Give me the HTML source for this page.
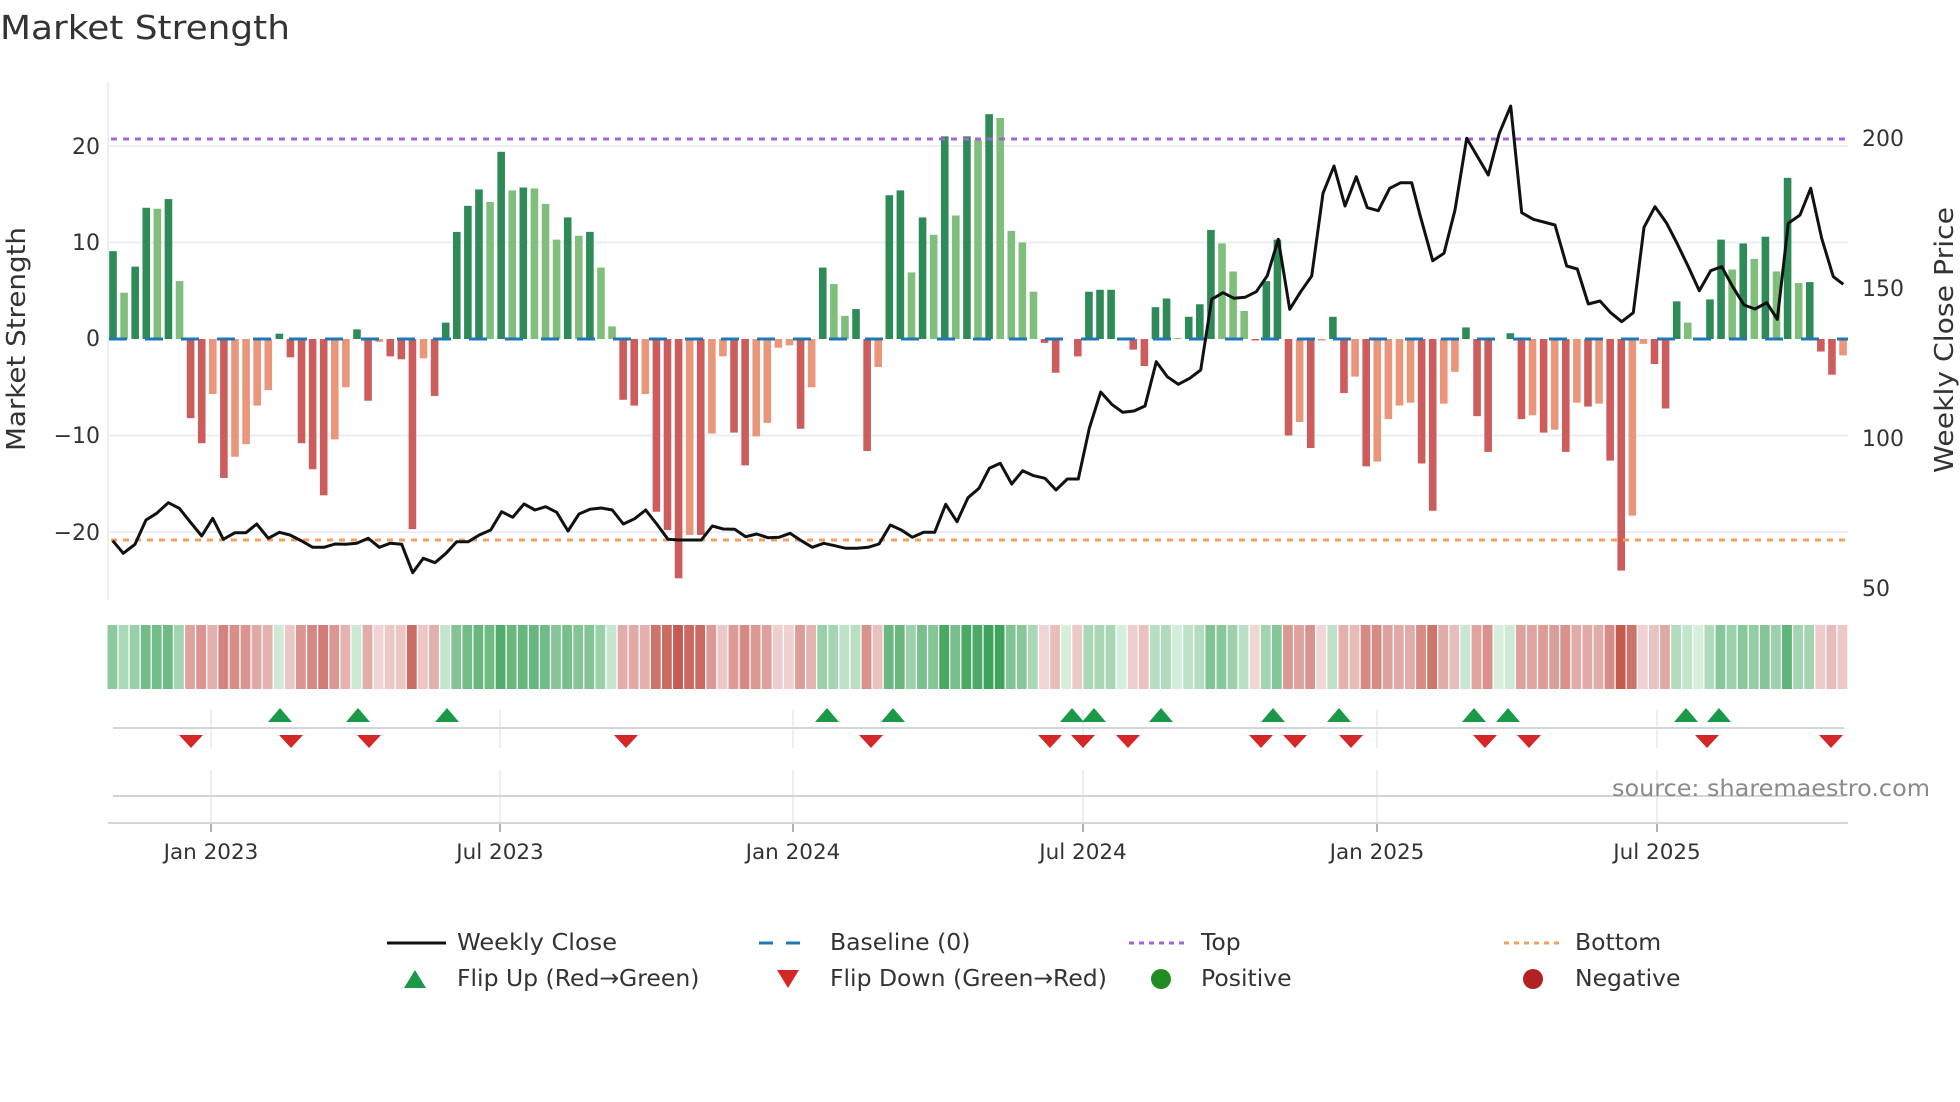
<!DOCTYPE html>
<html><head><meta charset="utf-8"><style>
html,body{margin:0;padding:0;background:#fff;}
svg{display:block;font-family:"DejaVu Sans","Liberation Sans",sans-serif;}
</style></head><body>
<svg id="s" width="1960" height="1102" viewBox="0 0 1960 1102" xmlns="http://www.w3.org/2000/svg">
<rect width="1960" height="1102" fill="#fff"/>
<text x="0" y="39" font-size="33" fill="#333" textLength="290" lengthAdjust="spacingAndGlyphs">Market Strength</text>
<g id="grid"></g>
<g id="bars"></g>
<g id="lines"></g>
<g id="heat"></g>
<g id="marks"></g>
<g font-size="22" fill="#333">
<text x="100" y="154" text-anchor="end">20</text>
<text x="100" y="250" text-anchor="end">10</text>
<text x="100" y="346" text-anchor="end">0</text>
<text x="100" y="443" text-anchor="end">−10</text>
<text x="100" y="540" text-anchor="end">−20</text>
<text x="1862" y="146">200</text>
<text x="1862" y="296">150</text>
<text x="1862" y="446">100</text>
<text x="1862" y="596">50</text>
</g>
<text transform="translate(25,339) rotate(-90)" font-size="26" fill="#333" text-anchor="middle" textLength="224" lengthAdjust="spacingAndGlyphs">Market Strength</text>
<text transform="translate(1953,340) rotate(-90)" font-size="26" fill="#333" text-anchor="middle" textLength="266" lengthAdjust="spacingAndGlyphs">Weekly Close Price</text>
<g font-size="21.5" fill="#333" text-anchor="middle">
<text x="211" y="859">Jan 2023</text>
<text x="500" y="859">Jul 2023</text>
<text x="793" y="859">Jan 2024</text>
<text x="1083" y="859">Jul 2024</text>
<text x="1377" y="859">Jan 2025</text>
<text x="1657" y="859">Jul 2025</text>
</g>
<text x="1930" y="796" font-size="23" fill="#8a8a8a" text-anchor="end" textLength="318" lengthAdjust="spacingAndGlyphs">source: sharemaestro.com</text>
<g font-size="23.5" fill="#333">
<line x1="387" y1="943" x2="446" y2="943" stroke="#111" stroke-width="3"/>
<text x="457" y="950" textLength="160" lengthAdjust="spacingAndGlyphs">Weekly Close</text>
<line x1="759" y1="943" x2="813" y2="943" stroke="#1f77b4" stroke-width="3" stroke-dasharray="14,13"/>
<text x="830" y="950">Baseline (0)</text>
<line x1="1129" y1="943" x2="1185" y2="943" stroke="#a066d8" stroke-width="3" stroke-dasharray="5,5"/>
<text x="1201" y="950">Top</text>
<line x1="1504" y1="943" x2="1560" y2="943" stroke="#f0a060" stroke-width="3" stroke-dasharray="5,5"/>
<text x="1575" y="950">Bottom</text>
<polygon points="404,988 426,988 415,970" fill="#1a9a48"/>
<text x="457" y="986">Flip Up (Red→Green)</text>
<polygon points="777,970 799,970 788,988" fill="#d62728"/>
<text x="830" y="986">Flip Down (Green→Red)</text>
<circle cx="1161" cy="979" r="10" fill="#228b22"/>
<text x="1201" y="986">Positive</text>
<circle cx="1533" cy="979" r="10" fill="#b22222"/>
<text x="1575" y="986">Negative</text>
</g>
</svg>
<script>
const NS="http://www.w3.org/2000/svg";
function el(p,t,a){const e=document.createElementNS(NS,t);for(const k in a)e.setAttribute(k,a[k]);p.appendChild(e);return e;}
const v=[9.1,4.8,7.5,13.6,13.5,14.5,6,-8.2,-10.8,-5.7,-14.4,-12.2,-10.9,-6.9,-5.3,0.55,-1.9,-10.8,-13.5,-16.2,-10.4,-5,1.0,-6.4,-0.3,-1.8,-2.1,-19.7,-2.0,-5.9,1.7,11.1,13.8,15.5,14.2,19.4,15.4,15.7,15.6,14,
10.3,12.6,10.7,11.1,7.4,1.3,-6.3,-6.9,-5.7,-17.9,-19.8,-24.8,-20.3,-20.3,-9.8,-1.8,-9.7,-13.1,-10.1,-8.7,-0.9,-0.65,-9.3,-5,7.4,5.7,2.4,3.1,-11.6,-2.9,14.9,15.4,6.9,12.6,10.8,21,12.8,21,20.6,23.3,
22.9,11.2,10,4.9,-0.4,-3.5,0,-1.8,4.9,5.1,5.1,0,-1.1,-2.8,3.3,4.2,0.1,2.3,3.6,11.3,9.9,7,2.9,-0.15,6,10.3,-10,-8.6,-11.3,-0.15,2.3,-5.6,-3.9,-13.2,-12.7,-8.3,-6.9,-6.6,-12.9,
-17.8,-6.7,-3.4,1.2,-8,-11.7,0,0.6,-8.3,-7.9,-9.7,-9.4,-11.7,-6.6,-7,-6.7,-12.6,-24,-18.3,-0.5,-2.6,-7.2,3.9,1.7,0,4.1,10.3,7.2,9.9,8.3,10.6,7,16.7,5.8,5.9,-1.3,-3.7,-1.7];
const light=new Set([1,4,6,9,11,12,13,14,20,21,24,28,34,36,38,39,40,42,44,45,48,52,54,55,58,59,60,61,63,65,66,69,72,74,76,78,80,81,82,83,96,100,101,102,107,109,112,114,115,116,117,120,121,128,130,132,134,137,138,142,146,148,150,152,156]);
const X0=113,DX=11.09,Y0=339,K=9.65;
const grid=document.getElementById('grid');
[20,10,-10,-20].forEach(g=>el(grid,'line',{x1:107,x2:1848,y1:Y0-g*K,y2:Y0-g*K,stroke:'#eceef3','stroke-width':2}));
el(grid,'line',{x1:108,x2:108,y1:82,y2:600,stroke:'#eceef3','stroke-width':2});
const bars=document.getElementById('bars');
v.forEach((val,i)=>{const x=X0+DX*i-3.8;const h=Math.abs(val)*K;let c;
 if(val>=0)c=light.has(i)?'#7fbf7b':'#2e8b57';else c=light.has(i)?'#e9967a':'#cd5c5c';
 if(h>0.3)el(bars,'rect',{x:x,y:val>=0?Y0-h:Y0,width:7.6,height:h,fill:c});});
const L=document.getElementById('lines');
el(L,'line',{x1:109,x2:1848,y1:Y0,y2:Y0,stroke:'#1f77b4','stroke-width':3,'stroke-dasharray':'18,18'});
el(L,'line',{x1:111,x2:1848,y1:139,y2:139,stroke:'#a066d8','stroke-width':3,'stroke-dasharray':'6,6'});
el(L,'line',{x1:111,x2:1848,y1:540,y2:540,stroke:'#f0a060','stroke-width':3,'stroke-dasharray':'6,6'});
const segs=[[100,[38,1322,70,1360,105,1333,138,1260,170,1240,205,1208,238,1225,270,1265,305,1308,338,1255,370,1318,405,1298,438,1298,470,1272,505,1315,538,1297,570,1305,605,1323,638,1342,672,1342,705,1332,738,1333,770,1330,805,1315,838,1342,870,1330,905,1333,938,1418,970,1375,1005,1388,1038,1360,1070,1325,1105,1325,1138,1305,1172,1290,1205,1235,1238,1252,1272,1212,1305,1230]],
[540,[17,1220,50,1237,84,1293,117,1242,150,1228,184,1224,217,1230,250,1272,284,1256,317,1230,350,1272,384,1318,417,1320,450,1320,484,1320,517,1278,550,1287,584,1288,617,1310,650,1302,684,1313,717,1312,750,1300,784,1322,817,1342,851,1330,884,1337,917,1345,951,1345,984,1342,1017,1332,1051,1275,1084,1290,1117,1312,1151,1297,1184,1297,1217,1213,1251,1265,1284,1193,1317,1165]],
[980,[28,1105,61,1090,95,1152,128,1112,161,1127,195,1135,228,1170,262,1137,295,1137,328,985,362,876,395,913,428,937,462,933,495,918,529,785,562,830,595,853,629,835,662,810,695,598,729,578,762,595,795,592,829,575,862,527,895,418,929,628,962,575,995,528,1029,280,1062,198,1095,318,1129,230,1162,323,1195,332,1229,265,1262,248,1295,248]],
[1420,[0,345,38,482,72,460,105,330,140,115,205,225,238,100,272,18,305,338,340,358,405,375,440,498,472,507,505,612,540,603,572,638,605,665,640,638,672,382,705,320,740,370,770,428,805,500,838,572,872,512,905,500,938,560,972,615,1005,627,1040,608,1072,658,1105,370,1140,345,1172,265,1205,415,1240,530,1270,553]]];
let pts=[];segs.forEach(([ox,a])=>{for(let i=0;i<a.length;i+=2)pts.push((ox+a[i]/3).toFixed(1)+','+(100+a[i+1]/3).toFixed(1));});
el(L,'polyline',{points:pts.join(' '),fill:'none',stroke:'#111','stroke-width':3,'stroke-linejoin':'round'});
const H=document.getElementById('heat');
function mix(a,b,t){return 'rgb('+a.map((x,i)=>Math.round(x+(b[i]-x)*t)).join(',')+')';}
v.forEach((val,i)=>{const t=Math.min(1,Math.abs(val)/24);let c;
 if(val>=0)c=mix([214,238,220],[58,160,88],Math.pow(t,0.8));else c=mix([242,216,216],[196,90,80],Math.pow(t,0.8));
 el(H,'rect',{x:X0+DX*i-5.5,y:625,width:9.8,height:64,fill:c});});
const M=document.getElementById('marks');
[211,500,793,1083,1377,1657].forEach(x=>{el(M,'line',{x1:x,x2:x,y1:710,y2:748,stroke:'#e6e8ee','stroke-width':1.5});el(M,'line',{x1:x,x2:x,y1:770,y2:823,stroke:'#e6e8ee','stroke-width':1.5});el(M,'line',{x1:x,x2:x,y1:823,y2:832,stroke:'#999','stroke-width':1.5});});
el(M,'line',{x1:113,x2:1844,y1:728,y2:728,stroke:'#d3d5da','stroke-width':2});
el(M,'line',{x1:113,x2:1844,y1:796,y2:796,stroke:'#d3d5da','stroke-width':2});
el(M,'line',{x1:108,x2:1848,y1:823,y2:823,stroke:'#d3d5da','stroke-width':2});
[280,358,447,827,893,1072,1094,1161,1273,1339,1474,1508,1686,1719].forEach(x=>el(M,'polygon',{points:(x-12)+',722 '+(x+12)+',722 '+x+',708',fill:'#1a9a48'}));
[191,291,369,626,871,1050,1083,1128,1261,1295,1351,1485,1529,1707,1831].forEach(x=>el(M,'polygon',{points:(x-12)+',735 '+(x+12)+',735 '+x+',748',fill:'#d62728'}));
</script>
</body></html>
